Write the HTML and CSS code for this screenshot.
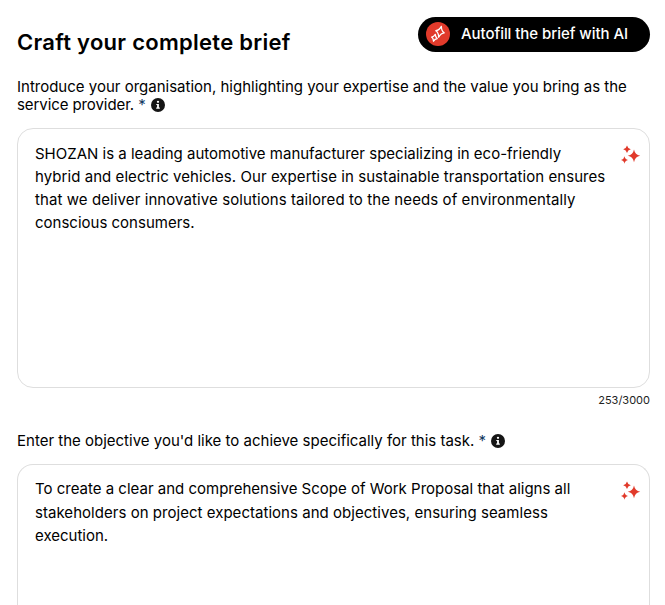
FILE: index.html
```
<!DOCTYPE html>
<html lang="en">
<head>
<meta charset="utf-8">
<title>Craft your complete brief</title>
<link rel="stylesheet" href="styles.css">
</head>
<body>
<svg class="defs" aria-hidden="true">
  <symbol id="info" viewBox="0 0 14 14">
    <circle cx="7" cy="7" r="7" fill="#151515"/>
    <circle cx="7" cy="3.8" r="1.15" fill="#fff"/>
    <path d="M5.3 5.9h2.6v3.7h.9v1.2H5.2V9.6h.9V7.1h-.8z" fill="#fff"/>
  </symbol>
  <symbol id="sparkles" viewBox="0 0 20 20">
    <g fill="#e13a2b">
      <path d="M13 4.5Q14 9.8 19.2 10.8Q14 11.8 13 17.2Q12 11.8 6.8 10.8Q12 9.8 13 4.5z"/>
      <path d="M6 0.5Q6.7 3.5 9.8 4.2Q6.7 4.9 6 7.9Q5.3 4.9 2.2 4.2Q5.3 3.5 6 .5z"/>
      <path d="M3.5 11.2Q4.1 14.4 7 15Q4.1 15.6 3.5 18.8Q2.9 15.6 0 15Q2.9 14.4 3.5 11.2z"/>
    </g>
  </symbol>
</svg>
<main class="page">
  <header class="header">
    <h1 class="title">Craft your complete brief</h1>
    <button class="autofill">
      <svg class="autofill-icon" viewBox="0 0 24 24">
        <circle cx="12" cy="12" r="12" fill="#e13a2b"/>
        <g fill="none" stroke="#fff" stroke-width="1.3" stroke-linejoin="round">
          <path transform="translate(14 9.8) rotate(14)" d="M0-5.6Q.9-1.4 4.3 0Q.9 1.4 0 5.6Q-.9 1.4-4.3 0Q-.9-1.4 0-5.6z"/>
          <path transform="translate(8.4 15.8) rotate(14)" d="M0-3.6Q.7-.9 2.9 0Q.7.9 0 3.6Q-.7.9-2.9 0Q-.7-.9 0-3.6z"/>
        </g>
      </svg>
      <span>Autofill the brief with AI</span>
    </button>
  </header>
  <section class="field">
    <p class="label">Introduce your organisation, highlighting your expertise and the value you bring as the<br><span class="provider">service provider.</span> <span class="star">*</span><svg class="info"><use href="#info"/></svg></p>
    <div class="box">
      <p class="text"><span class="l1">SHOZAN is a leading automotive manufacturer specializing in eco-friendly</span><br><span class="l2">hybrid and electric vehicles. Our expertise in sustainable transportation ensures</span><br><span class="l3">that we deliver innovative solutions tailored to the needs of environmentally</span><br>conscious consumers.</p>
      <svg class="sparkles"><use href="#sparkles"/></svg>
    </div>
    <p class="count">253/3000</p>
  </section>
  <section class="field second">
    <p class="label">Enter the objective you'd like to achieve specifically for this task. <span class="star">*</span><svg class="info"><use href="#info"/></svg></p>
    <div class="box box-cut">
      <p class="text"><span class="l1">To create a clear and comprehensive Scope of Work Proposal that aligns all</span><br><span class="l4">stakeholders on project expectations and objectives, ensuring seamless</span><br>execution.</p>
      <svg class="sparkles"><use href="#sparkles"/></svg>
    </div>
  </section>
</main>
</body>
</html>
```
FILE: styles.css
```
* { box-sizing: border-box; }
body { margin: 0; background: #fff; color: #000; font: 15px/18px Inter, "Liberation Sans", sans-serif; }
.defs { display: none; }
p, h1 { margin: 0; }
.page { padding: 17px 15px 0 17px; }
.header { display: flex; justify-content: space-between; height: 61px; }
.title { margin-top: 12px; font-size: 22px; line-height: 27px; font-weight: 600; letter-spacing: .28px; white-space: nowrap; }
.autofill { display: flex; align-items: center; gap: 11px; width: 232px; height: 35px; padding: 0 0 1px 8px; border: 0; border-radius: 18px; background: #000; color: #fff; font: 500 15px/20px Inter, "Liberation Sans", sans-serif; letter-spacing: -.05px; white-space: nowrap; }
.autofill-icon { width: 24px; height: 24px; flex: none; }
.label { white-space: nowrap; }
.provider { letter-spacing: -.085px; }
.star { color: #12395f; }
.info { width: 14px; height: 14px; margin-left: 5px; vertical-align: -2px; }
.box { display: flex; justify-content: space-between; height: 260px; margin-top: 14px; padding: 13px 9px 0 17px; border: 1px solid #dedede; border-radius: 16px; }
.box-cut { height: 141px; border-bottom: 0; border-radius: 16px 16px 0 0; }
.text { line-height: 23px; white-space: nowrap; }
.box-cut .text { line-height: 23.4px; margin-top: -.8px; }
.l1 { letter-spacing: 0; }
.l2 { letter-spacing: .06px; }
.l3 { letter-spacing: .09px; }
.l4 { letter-spacing: .035px; }
.sparkles { width: 20px; height: 20px; margin: 3px -1px 0 0; flex: none; }
.count { margin-top: 5px; font-size: 11px; line-height: 14px; text-align: right; color: #222; }
.second { margin-top: 25px; }
```
